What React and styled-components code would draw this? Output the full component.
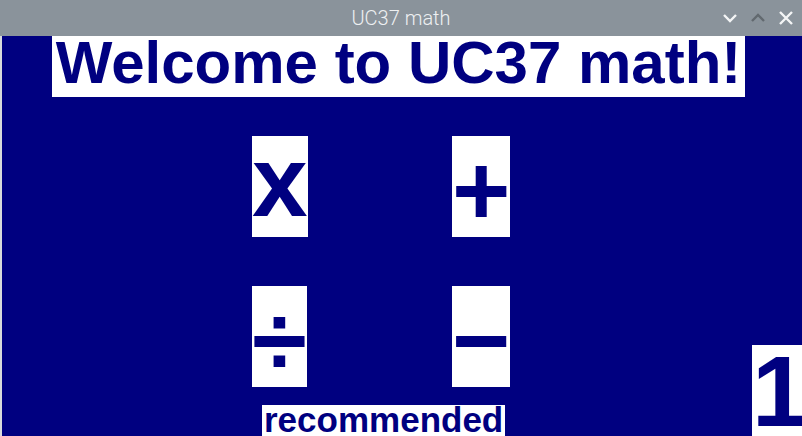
import React from 'react';
import styled, { createGlobalStyle } from 'styled-components';

const GlobalStyle = createGlobalStyle`
  html, body {
    margin: 0;
    padding: 0;
    width: 802px;
    height: 436px;
    overflow: hidden;
    background: #000080;
  }
`;

const Window = styled.div`
  width: 802px;
  height: 436px;
  display: flex;
  flex-direction: column;
  overflow: hidden;
  font-family: "Liberation Sans", Arial, sans-serif;
`;

const TitleBar = styled.div`
  height: 36px;
  flex: none;
  background: #8a939b;
  display: flex;
  align-items: center;
  justify-content: center;
  position: relative;
  color: #eef0f2;
  font-family: Roboto, "Liberation Sans", sans-serif;
  font-weight: 300;
  font-size: 20px;
`;

const Controls = styled.div`
  position: absolute;
  right: 8px;
  top: 0;
  height: 36px;
  display: flex;
  align-items: center;
  gap: 12px;
`;

const Content = styled.div`
  flex: 1;
  min-height: 0;
  background: #000080;
  border-left: 2px solid #d8dadc;
  display: flex;
  flex-direction: column;
  overflow: hidden;
`;

const Banner = styled.div`
  flex: none;
  align-self: flex-start;
  margin-left: 50px;
  width: 693px;
  height: 61px;
  background: #ffffff;
  color: #000080;
  font-weight: 700;
  font-size: 60px;
  line-height: 53px;
  text-align: center;
  white-space: nowrap;
`;

const Body = styled.div`
  flex: none;
  display: flex;
`;

const Main = styled.div`
  flex: none;
  width: 750px;
  display: flex;
  flex-direction: column;
`;

const OpGrid = styled.div`
  flex: none;
  margin-left: 250px;
  margin-top: 39px;
  display: grid;
  grid-template-columns: 58px 58px;
  column-gap: 142px;
  row-gap: 49px;
`;

const OpButton = styled.div`
  justify-self: start;
  height: ${(p) => 101 - p.$drop}px;
  padding-top: ${(p) => p.$drop}px;
  background: #ffffff;
  color: #000080;
  font-weight: 700;
  font-size: 100px;
  line-height: 91px;
  white-space: nowrap;
  cursor: pointer;
`;

const Hint = styled.div`
  flex: none;
  align-self: flex-start;
  margin-left: 260px;
  margin-top: 18px;
  height: 40px;
  padding: 0 2px;
  background: #ffffff;
  color: #000080;
  font-weight: 700;
  font-size: 35px;
  line-height: 30px;
  white-space: nowrap;
`;

const Score = styled.div`
  flex: none;
  align-self: flex-start;
  margin-top: 248px;
  height: 110px;
  padding-right: 6px;
  background: #ffffff;
  color: #000080;
  font-weight: 700;
  font-size: 100px;
  line-height: 93px;
  white-space: nowrap;
`;

const Chevron = ({ up, color }) => (
  <svg width="16" height="16" viewBox="0 0 16 16">
    <path
      d={up ? 'M2 11 L8 5 L14 11' : 'M2 5 L8 11 L14 5'}
      fill="none"
      stroke={color}
      strokeWidth="2.4"
    />
  </svg>
);

const Close = () => (
  <svg width="16" height="16" viewBox="0 0 16 16">
    <path d="M2 2 L14 14 M14 2 L2 14" fill="none" stroke="#f4f5f6" strokeWidth="2.4" />
  </svg>
);

const ops = [
  { sign: 'x', drop: 0 },
  { sign: '+', drop: 9 },
  { sign: '÷', drop: 9 },
  { sign: '−', drop: 9 },
];

export default function App() {
  return (
    <>
      <GlobalStyle />
      <Window>
        <TitleBar>
          UC37 math
          <Controls>
            <Chevron color="#f4f5f6" />
            <Chevron up color="#62696f" />
            <Close />
          </Controls>
        </TitleBar>
        <Content>
          <Banner>Welcome to UC37 math!</Banner>
          <Body>
            <Main>
              <OpGrid>
                {ops.map((op) => (
                  <OpButton key={op.sign} $drop={op.drop}>
                    {op.sign}
                  </OpButton>
                ))}
              </OpGrid>
              <Hint>recommended</Hint>
            </Main>
            <Score>1</Score>
          </Body>
        </Content>
      </Window>
    </>
  );
}
